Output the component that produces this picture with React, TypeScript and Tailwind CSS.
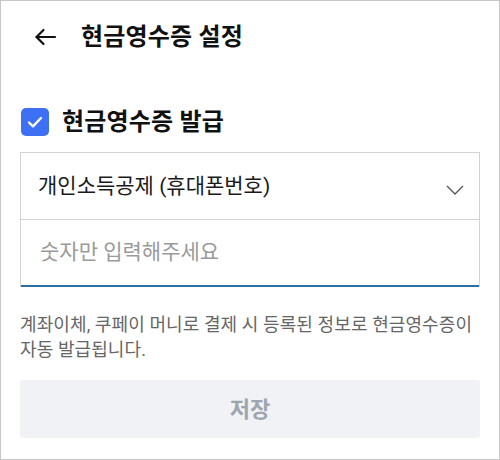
import React from "react";

const font = { fontFamily: '"Roboto", "Noto Sans CJK KR", sans-serif' };

export default function App() {
    return (
        <div
            className="w-[500px] h-[460px] border border-[#c6c6c6] bg-white text-[#111] overflow-hidden"
            style={font}
        >
            {/* Header */}
            <div className="h-[71px] flex items-center pl-[33px]">
                <svg width="23" height="18" viewBox="0 0 23 18" fill="none" stroke="#111" strokeWidth="2.2" strokeLinecap="round" strokeLinejoin="round">
                    <path d="M21 9H2.5" />
                    <path d="M9.5 2L2.5 9l7 7" />
                </svg>
                <h1 className="ml-[24px] text-[24px] font-bold leading-none tracking-[0.2px]">현금영수증 설정</h1>
            </div>

            <div className="px-[19px]">
                {/* Checkbox */}
                <div className="mt-[35px] h-[29px] flex items-center">
                    <div className="ml-[1px] w-[28px] h-[28px] rounded-[5px] bg-[#3d70f2] flex items-center justify-center">
                        <svg width="16" height="12" viewBox="0 0 16 12" fill="none" stroke="white" strokeWidth="2.4" strokeLinecap="round" strokeLinejoin="round">
                            <path d="M2 6.5l4 3.8L14 2" />
                        </svg>
                    </div>
                    <span className="ml-[13px] text-[24px] font-bold leading-none tracking-[0.2px]">현금영수증 발급</span>
                </div>

                {/* Select + input */}
                <div className="mt-[16px] border-x border-t border-[#d3d3d3]">
                    <div className="h-[67px] flex items-center justify-between pl-[17px] pr-[15px] border-b border-[#d3d3d3]">
                        <span className="text-[21px] text-[#1a1a1a] leading-none">개인소득공제 (휴대폰번호)</span>
                        <svg width="18" height="10" viewBox="0 0 18 10" fill="none" stroke="#555" strokeWidth="1.3" className="mt-[8px]">
                            <path d="M1 1l8 8 8-8" />
                        </svg>
                    </div>
                    <div className="h-[67px] flex items-center pl-[19px] border-b-2 border-[#2c6fa3]">
                        <span className="text-[21px] text-[#9a9a9a] leading-none">숫자만 입력해주세요</span>
                    </div>
                </div>

                {/* Help text */}
                <p className="mt-[25px] text-[18px] leading-[25px] text-[#666] tracking-[0.1px] break-keep">
                    계좌이체, 쿠페이 머니로 결제 시 등록된 정보로 현금영수증이 자동 발급됩니다.
                </p>

                {/* Save */}
                <button className="mt-[18px] w-full h-[58px] rounded-[3px] bg-[#f0f2f5] text-[22px] font-bold text-[#9ea5ae] flex items-center justify-center">
                    저장
                </button>
            </div>
        </div>
    );
}
